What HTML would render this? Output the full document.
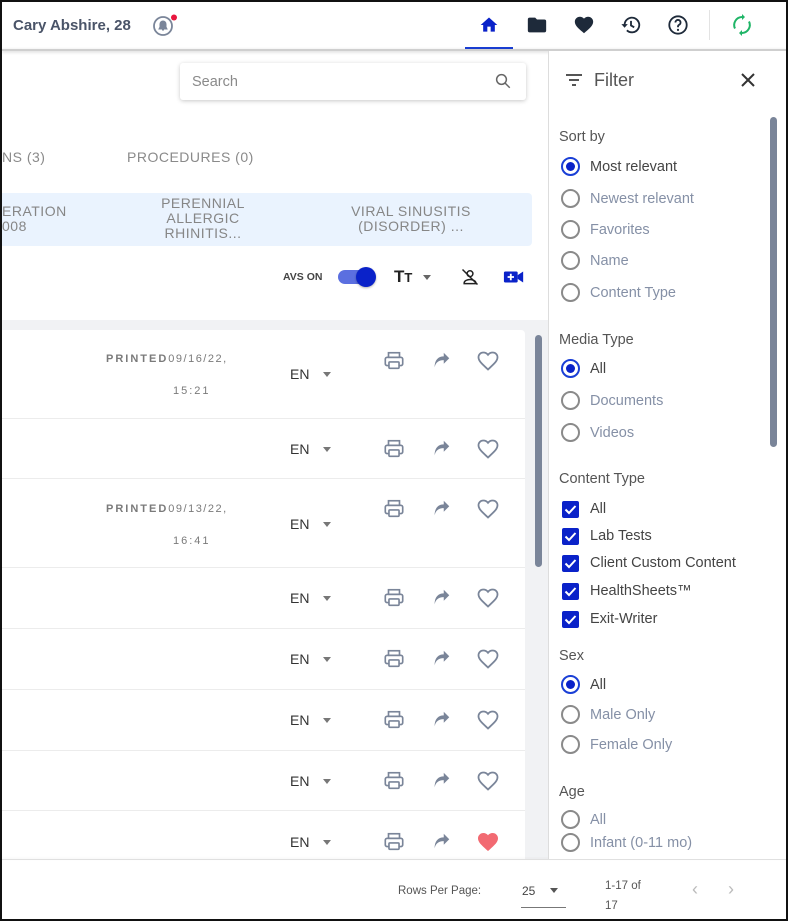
<!DOCTYPE html>
<html><head><meta charset="utf-8">
<style>
*{box-sizing:border-box;margin:0;padding:0}
body{width:788px;height:921px;overflow:hidden;background:#fff;font-family:"Liberation Sans",sans-serif;position:relative}
.a{position:absolute}
.frame{position:absolute;left:0;top:0;width:788px;height:921px;border:2px solid #111;z-index:50;pointer-events:none}
.t{position:absolute;white-space:nowrap}
.rad{position:absolute;width:19px;height:19px;border:2px solid #8a8a8a;border-radius:50%}
.rad.on{border-color:#1a3fd6}
.rad.on::after{content:"";position:absolute;left:3px;top:3px;width:9px;height:9px;border-radius:50%;background:#0a22c9}
.cb{position:absolute;width:17px;height:17px;background:#0a22c9;border-radius:2px}
.lab{position:absolute;font-size:14.5px;color:#8590a6;white-space:nowrap}
.lab.d{color:#444}
.h{position:absolute;font-size:14.5px;color:#555}
.sep{position:absolute;left:2px;width:523px;height:1px;background:#ececec}
</style></head><body>
<div class="frame"></div>
<!-- header -->
<div class="t" style="left:13px;top:17px;font-size:15px;font-weight:bold;color:#4a5468">Cary Abshire, 28</div>
<svg class="a" style="left:152px;top:14px" width="26" height="24" viewBox="0 0 26 24"><circle cx="11" cy="12" r="9" fill="none" stroke="#7a8599" stroke-width="1.8"/><path d="M7 15h8l-1-2v-3a3 3 0 0 0-6 0v3z M10 16h2" fill="#7a8599" stroke="#7a8599"/><circle cx="22" cy="3.5" r="3" fill="#e8173e"/></svg>
<svg class="a" style="left:479px;top:15px" width="20" height="20" viewBox="0 0 24 24"><path d="M10 20v-6h4v6h5v-8h3L12 3 2 12h3v8z" fill="#0a22c9"/></svg>
<div class="a" style="left:465px;top:47px;width:48px;height:3px;background:#1a3fd6"></div>
<svg class="a" style="left:526px;top:14px" width="22" height="22" viewBox="0 0 24 24"><path d="M10 4H4a2 2 0 0 0-2 2v12a2 2 0 0 0 2 2h16a2 2 0 0 0 2-2V8a2 2 0 0 0-2-2h-8z" fill="#1e2a3a"/></svg>
<svg class="a" style="left:573px;top:14px" width="22" height="22" viewBox="0 0 24 24"><path d="M12 21l-1.5-1.3C5.4 15.4 2 12.3 2 8.5 2 5.4 4.4 3 7.5 3c1.7 0 3.4.8 4.5 2.1C13.1 3.8 14.8 3 16.5 3 19.6 3 22 5.4 22 8.5c0 3.8-3.4 6.9-8.5 11.2z" fill="#1e2a3a"/></svg>
<svg class="a" style="left:620px;top:14px" width="22" height="22" viewBox="0 0 24 24"><path d="M5 12a8 8 0 1 1 2.5 5.8" fill="none" stroke="#1e2a3a" stroke-width="2"/><path d="M1.5 11h7l-3.5 4z" fill="#1e2a3a"/><path d="M12 7.5v5l3.5 2" fill="none" stroke="#1e2a3a" stroke-width="2"/></svg>
<svg class="a" style="left:667px;top:14px" width="22" height="22" viewBox="0 0 24 24"><circle cx="12" cy="12" r="9.5" fill="none" stroke="#1e2a3a" stroke-width="2"/><path d="M9.2 9.3a2.8 2.8 0 1 1 4 2.5c-.8.4-1.2 1-1.2 2v.7" fill="none" stroke="#1e2a3a" stroke-width="2"/><circle cx="12" cy="17.3" r="1.2" fill="#1e2a3a"/></svg>
<div class="a" style="left:709px;top:10px;width:1px;height:30px;background:#e3e3e3"></div>
<svg class="a" style="left:730px;top:13px" width="24" height="24" viewBox="0 0 24 24"><path d="M12 4a8 8 0 0 0-7 11.5M12 20a8 8 0 0 0 7-11.5" fill="none" stroke="#1fb567" stroke-width="2"/><path d="M12 1v6l3-3zM12 23v-6l-3 3z" fill="#1fb567"/></svg>
<div class="a" style="left:2px;top:49px;width:784px;height:2px;background:#cfcfcf;box-shadow:0 1px 3px rgba(0,0,0,.2)"></div>

<!-- search -->
<div class="a" style="left:180px;top:63px;width:346px;height:37px;background:#fff;border-radius:3px;box-shadow:0 1px 4px rgba(0,0,0,.22)"></div>
<div class="t" style="left:192px;top:74px;font-size:14.5px;color:#8a8a8a">Search</div>
<svg class="a" style="left:494px;top:72px" width="18" height="18" viewBox="0 0 24 24"><circle cx="10" cy="10" r="6.5" fill="none" stroke="#666" stroke-width="2"/><path d="M15 15l6 6" stroke="#666" stroke-width="2"/></svg>

<!-- tabs -->
<div class="t" style="left:2px;top:149px;font-size:14px;color:#8a8a8a;letter-spacing:.5px">NS (3)</div>
<div class="t" style="left:127px;top:149px;font-size:14px;color:#8a8a8a;letter-spacing:.5px">PROCEDURES (0)</div>

<!-- chips -->
<div class="a" style="left:2px;top:193px;width:530px;height:53px;background:#eaf3fe;border-radius:0 4px 4px 0"></div>
<div class="t" style="left:2px;top:204px;font-size:14px;color:#868686;line-height:15px;letter-spacing:.5px">ERATION<br>008</div>
<div class="t" style="left:150px;top:196px;width:106px;text-align:center;font-size:14px;color:#868686;line-height:15px;letter-spacing:.5px">PERENNIAL<br>ALLERGIC<br>RHINITIS...</div>
<div class="t" style="left:336px;top:204px;width:150px;text-align:center;font-size:14px;color:#868686;line-height:15px;letter-spacing:.5px">VIRAL SINUSITIS<br>(DISORDER) ...</div>

<!-- controls -->
<div class="t" style="left:283px;top:271px;font-size:10.5px;font-weight:bold;color:#444">AVS ON</div>
<div class="a" style="left:338px;top:270px;width:32px;height:14px;border-radius:7px;background:#5b6fe0"></div>
<div class="a" style="left:356px;top:267px;width:20px;height:20px;border-radius:50%;background:#0a22c9;box-shadow:0 1px 2px rgba(0,0,0,.3)"></div>
<div class="t" style="left:394px;top:267px;font-size:17px;font-weight:bold;color:#222">T<span style="font-size:13px">T</span></div>
<div class="a" style="left:423px;top:275px;border:4px solid transparent;border-top:5px solid #666"></div>
<svg class="a" style="left:460px;top:267px" width="20" height="20" viewBox="0 0 24 24"><circle cx="12" cy="8" r="3.5" fill="none" stroke="#222" stroke-width="1.8"/><path d="M5 20v-1c0-2.5 4-4 7-4s7 1.5 7 4v1z" fill="none" stroke="#222" stroke-width="1.8"/><path d="M3 3l18 18" stroke="#222" stroke-width="1.8"/></svg>
<svg class="a" style="left:503px;top:268px" width="22" height="18" viewBox="0 0 24 18"><rect x="1" y="3" width="15" height="12" rx="1.5" fill="#0a22c9"/><path d="M16 7l6-4v12l-6-4z" fill="#0a22c9"/><path d="M8.5 5.5v7M5 9h7" stroke="#fff" stroke-width="2"/></svg>

<!-- list area -->
<div class="a" style="left:2px;top:320px;width:546px;height:540px;background:#f1f2f4"></div>
<div class="a" style="left:2px;top:330px;width:523px;height:530px;background:#fff;border-radius:0 4px 0 0"></div>
<div class="a" style="left:535px;top:335px;width:7px;height:232px;background:#7a8599;border-radius:4px"></div>

<div class="sep" style="top:418px"></div>
<div class="sep" style="top:478px"></div>
<div class="sep" style="top:567px"></div>
<div class="sep" style="top:628px"></div>
<div class="sep" style="top:689px"></div>
<div class="sep" style="top:750px"></div>
<div class="sep" style="top:810px"></div>

<div class="t" style="left:106px;top:353px;font-size:11px;font-weight:bold;color:#7a7a7a;letter-spacing:2px">PRINTED<span style="letter-spacing:1.5px;font-weight:normal">09/16/22,</span></div>
<div class="t" style="left:173px;top:385px;font-size:11px;color:#7a7a7a;letter-spacing:2px">15:21</div>
<div class="t" style="left:106px;top:503px;font-size:11px;font-weight:bold;color:#7a7a7a;letter-spacing:2px">PRINTED<span style="letter-spacing:1.5px;font-weight:normal">09/13/22,</span></div>
<div class="t" style="left:173px;top:535px;font-size:11px;color:#7a7a7a;letter-spacing:2px">16:41</div>

<svg width="0" height="0" style="position:absolute">
<defs>
<g id="pr"><rect x="6" y="3" width="12" height="5" fill="none" stroke="#7a8599" stroke-width="1.8"/><rect x="2.5" y="8" width="19" height="9" rx="2" fill="none" stroke="#7a8599" stroke-width="1.8"/><rect x="6.5" y="13" width="11" height="7" rx="1" fill="#fff" stroke="#7a8599" stroke-width="1.8"/></g>
<g id="sh"><path d="M5 19c1-5 4-8 10-8v4l6-6-6-6v4C9 7 5 11 5 19z" fill="#7a8599"/></g>
<g id="ht"><path d="M12 20.5l-1.4-1.3C5.4 14.4 2.5 11.7 2.5 8.3 2.5 5.6 4.6 3.5 7.3 3.5c1.8 0 3.6.9 4.7 2.3 1.1-1.4 2.9-2.3 4.7-2.3 2.7 0 4.8 2.1 4.8 4.8 0 3.4-2.9 6.1-8.1 10.9z" fill="none" stroke="#7a8599" stroke-width="1.8"/></g>
</defs></svg>

<div id="rows"></div>
<script>
var rows=[[361,374],[449,449],[509,524],[598,598],[659,659],[720,720],[781,781],[842,842]];
var h='';
rows.forEach(function(r,i){
 var ic=r[0],en=r[1];
 h+='<div class="t" style="left:290px;top:'+(en-8)+'px;font-size:14px;color:#333">EN</div>';
 h+='<div class="a" style="left:323px;top:'+(en-2)+'px;border:4px solid transparent;border-top:5px solid #777"></div>';
 h+='<svg class="a" style="left:383px;top:'+(ic-11)+'px" width="22" height="22" viewBox="0 0 24 24"><use href="#pr"/></svg>';
 h+='<svg class="a" style="left:430px;top:'+(ic-11)+'px" width="22" height="22" viewBox="0 0 24 24"><use href="#sh"/></svg>';
 if(i==7) h+='<svg class="a" style="left:476px;top:'+(ic-12)+'px" width="24" height="24" viewBox="0 0 24 24"><path d="M12 21l-1.5-1.3C5.4 15.1 2 12.1 2 8.4 2 5.4 4.4 3 7.4 3c1.8 0 3.5.8 4.6 2.2C13.1 3.8 14.8 3 16.6 3 19.6 3 22 5.4 22 8.4c0 3.7-3.4 6.7-8.5 11.3z" fill="#f26a72"/></svg>';
 else h+='<svg class="a" style="left:476px;top:'+(ic-12)+'px" width="24" height="24" viewBox="0 0 24 24"><use href="#ht"/></svg>';
});
document.getElementById('rows').innerHTML=h;
</script>

<!-- footer -->
<div class="a" style="left:2px;top:859px;width:784px;height:1px;background:#e0e0e0;box-shadow:0 -1px 2px rgba(0,0,0,.06)"></div>
<div class="t" style="left:398px;top:885px;font-size:11.5px;color:#555">Rows Per Page:</div>
<div class="t" style="left:522px;top:884px;font-size:12px;color:#444">25</div>
<div class="a" style="left:550px;top:888px;border:4px solid transparent;border-top:5px solid #555"></div>
<div class="a" style="left:521px;top:907px;width:45px;height:1px;background:#777"></div>
<div class="t" style="left:605px;top:876px;font-size:11.5px;color:#555;line-height:20px">1-17 of<br>17</div>
<div class="t" style="left:692px;top:879px;font-size:18px;color:#bbb">‹</div>
<div class="t" style="left:728px;top:879px;font-size:18px;color:#bbb">›</div>

<!-- filter panel -->
<div class="a" style="left:548px;top:51px;width:1px;height:808px;background:#ddd"></div>
<div class="a" style="left:549px;top:51px;width:237px;height:808px;background:#fff"></div>
<svg class="a" style="left:565px;top:72px" width="18" height="16" viewBox="0 0 18 16"><path d="M1 3h16M4 8h10M7 13h4" stroke="#555" stroke-width="2"/></svg>
<div class="t" style="left:594px;top:70px;font-size:18px;color:#555">Filter</div>
<svg class="a" style="left:740px;top:72px" width="16" height="16" viewBox="0 0 16 16"><path d="M2 2l12 12M14 2L2 14" stroke="#333" stroke-width="2"/></svg>
<div class="a" style="left:770px;top:117px;width:7px;height:330px;background:#7a8599;border-radius:4px"></div>

<div class="h" style="left:559px;top:129px">Sort by</div>
<div class="rad on" style="left:561px;top:157px"></div><div class="lab d" style="left:590px;top:159px">Most relevant</div>
<div class="rad" style="left:561px;top:189px"></div><div class="lab" style="left:590px;top:191px">Newest relevant</div>
<div class="rad" style="left:561px;top:220px"></div><div class="lab" style="left:590px;top:222px">Favorites</div>
<div class="rad" style="left:561px;top:251px"></div><div class="lab" style="left:590px;top:253px">Name</div>
<div class="rad" style="left:561px;top:283px"></div><div class="lab" style="left:590px;top:285px">Content Type</div>

<div class="h" style="left:559px;top:332px">Media Type</div>
<div class="rad on" style="left:561px;top:359px"></div><div class="lab d" style="left:590px;top:361px">All</div>
<div class="rad" style="left:561px;top:391px"></div><div class="lab" style="left:590px;top:393px">Documents</div>
<div class="rad" style="left:561px;top:423px"></div><div class="lab" style="left:590px;top:425px">Videos</div>

<div class="h" style="left:559px;top:471px">Content Type</div>
<div id="cbs"></div>
<script>
var c=[['All',509],['Lab Tests',536],['Client Custom Content',563],['HealthSheets™',591],['Exit-Writer',619]],s='';
c.forEach(function(x){s+='<div class="cb" style="left:562px;top:'+(x[1]-8)+'px"><svg width="17" height="17" viewBox="0 0 17 17"><path d="M3.5 8.5l3.5 3.5 6.5-7" fill="none" stroke="#fff" stroke-width="2"/></svg></div><div class="lab d" style="left:590px;top:'+(x[1]-8)+'px">'+x[0]+'</div>';});
document.getElementById('cbs').innerHTML=s;
</script>

<div class="h" style="left:559px;top:648px">Sex</div>
<div class="rad on" style="left:561px;top:675px"></div><div class="lab d" style="left:590px;top:677px">All</div>
<div class="rad" style="left:561px;top:705px"></div><div class="lab" style="left:590px;top:707px">Male Only</div>
<div class="rad" style="left:561px;top:735px"></div><div class="lab" style="left:590px;top:737px">Female Only</div>

<div class="h" style="left:559px;top:784px">Age</div>
<div class="rad" style="left:561px;top:810px"></div><div class="lab" style="left:590px;top:812px">All</div>
<div class="rad" style="left:561px;top:833px"></div><div class="lab" style="left:590px;top:835px">Infant (0-11 mo)</div>
</body></html>
